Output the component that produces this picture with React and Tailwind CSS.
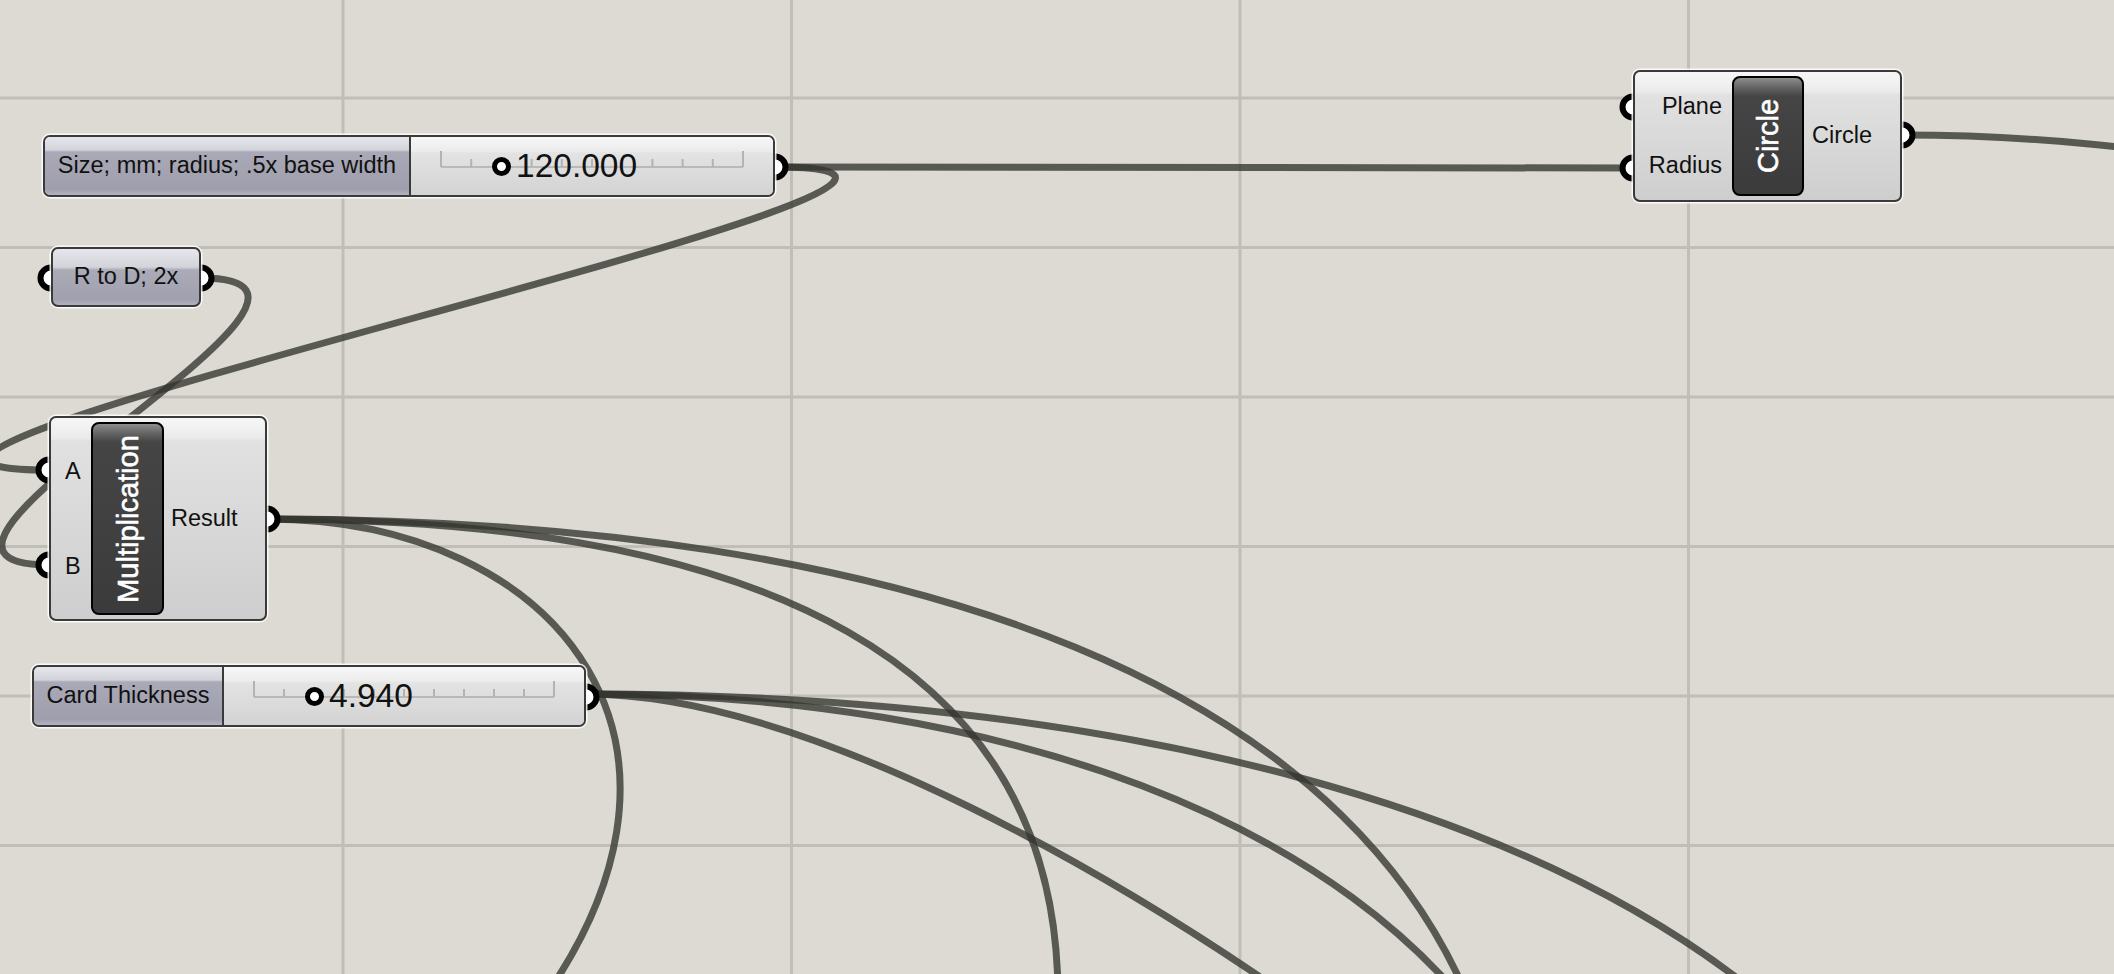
import React from 'react';

// canvas grid + wires are a drawing, nodes are placed on the canvas
const GRID_X = [343, 791.5, 1240, 1688.5];
const GRID_Y = [98, 247.5, 397, 546.5, 696, 845.5];

const WIRES = [
    'M775 167 L1633 168',
    'M775 167 C1145 167 -321 470 49 470',
    'M201 278 C411 278 -161 565 49 565',
    'M267 519 C560 519 745 750 520 1030',
    'M267 519 C760 519 1060 660 1058 1000',
    'M267 519 C900 519 1380 680 1490 1060',
    'M586 694 C1100 694 1560 800 1810 1040',
    'M586 694 C1000 694 1350 820 1500 1050',
    'M586 694 C810 694 1130 880 1350 1040',
    'M1902 135 C2050 135 2150 150 2300 170',
];

function Port({ side, y }) {
    return (
        <div
            className={`absolute z-0 w-[27px] h-[27px] -translate-x-1/2 -translate-y-1/2 rounded-full border-[6px] border-black bg-white ${side === 'left' ? 'left-0' : 'left-full'}`}
            style={{ top: y }}
        />
    );
}

function Ticks() {
    const n = 10;
    return (
        <svg className="absolute inset-0 h-full w-full" preserveAspectRatio="none">
            <svg x="30" y="0" width="calc(100% - 60px)" height="100%" overflow="visible">
                <line x1="0" y1="30" x2="100%" y2="30" stroke="#b9b9b9" strokeWidth="2" />
                {Array.from({ length: n + 1 }).map((_, i) => (
                    <line
                        key={i}
                        x1={`${(i / n) * 100}%`}
                        x2={`${(i / n) * 100}%`}
                        y1={i === 0 || i === n ? 14 : 22}
                        y2="30"
                        stroke="#b3b3b3"
                        strokeWidth="2"
                    />
                ))}
            </svg>
        </svg>
    );
}

function Slider({ left, top, width, nameWidth, name, value }) {
    return (
        <div className="absolute h-[62px]" style={{ left, top, width }}>
            <Port side="right" y={32} />
            <div className="relative z-10 flex h-full w-full overflow-hidden rounded-[7px] border-[2.5px] border-[#3a3a3a] shadow-[0_0_0_1.5px_rgba(255,255,255,0.85)]">
                <div
                    className="flex shrink-0 items-center justify-center border-r-[2.5px] border-[#3a3a3a] bg-[linear-gradient(to_bottom,#e6e6ec_0px,#d2d2da_13px,#aaa9b7_15px,#9f9ead_90%,#b3b2bf_100%)] text-[23.5px] text-[#111]"
                    style={{ width: nameWidth }}
                >
                    {name}
                </div>
                <div className="relative flex flex-1 items-center bg-[linear-gradient(to_bottom,#f7f7f7_0px,#ececec_14px,#e3e3e3_16px,#d3d3d3_100%)] pl-[81px]">
                    <Ticks />
                    <div className="relative h-[19px] w-[19px] rounded-full border-[5px] border-black bg-white" />
                    <span className="relative ml-[5px] text-[33.5px] leading-none text-[#111]">{value}</span>
                </div>
            </div>
        </div>
    );
}

function Pill({ label }) {
    return (
        <div className="relative h-full w-full overflow-hidden rounded-[8px] border-[2.5px] border-black bg-[linear-gradient(to_bottom,#8e8e8e_0px,#6a6a6a_8px,#454545_18px,#3b3b3b_100%)]">
            <span className="absolute left-1/2 top-1/2 -translate-x-1/2 -translate-y-1/2 -rotate-90 whitespace-nowrap text-[29px] leading-none text-white [-webkit-text-stroke:0.6px_white]">
                {label}
            </span>
        </div>
    );
}

const bodyCls =
    'relative z-10 flex h-full w-full rounded-[7px] border-[2.5px] border-[#3a3a3a] bg-[linear-gradient(to_bottom,#f6f6f6_0px,#ebebeb_20px,#e1e1e1_23px,#cecece_100%)] py-[4px] shadow-[0_0_0_1.5px_rgba(255,255,255,0.85)] text-[23.5px] text-[#111]';

export default function App() {
    return (
        <div className="relative h-[974px] w-[2114px] overflow-hidden bg-[#dcdad3] font-['Liberation_Sans',Arial,sans-serif]">
            <svg className="absolute inset-0" width="2114" height="974">
                {GRID_X.map((x) => (
                    <line key={'x' + x} x1={x} x2={x} y1="0" y2="974" stroke="#c1beb7" strokeWidth="3" />
                ))}
                {GRID_Y.map((y) => (
                    <line key={'y' + y} x1="0" x2="2114" y1={y} y2={y} stroke="#c1beb7" strokeWidth="3" />
                ))}
                {WIRES.map((d, i) => (
                    <path key={i} d={d} fill="none" stroke="#35352f" strokeOpacity="0.78" strokeWidth="7" />
                ))}
            </svg>

            {/* sliders */}
            <Slider left={43} top={135} width={732} nameWidth={366} name="Size; mm; radius; .5x base width" value="120.000" />
            <Slider left={32} top={665} width={554} nameWidth={190} name="Card Thickness" value="4.940" />

            {/* R to D panel */}
            <div className="absolute h-[60px] w-[150px]" style={{ left: 51, top: 247 }}>
                <Port side="left" y={31} />
                <Port side="right" y={31} />
                <div className="relative z-10 flex h-full w-full items-center justify-center rounded-[7px] border-[2.5px] border-[#3a3a3a] bg-[linear-gradient(to_bottom,#e6e6ec_0px,#d3d3da_18px,#ababb8_21px,#a0a0ae_90%,#b2b1be_100%)] text-[23.5px] text-[#111] shadow-[0_0_0_1.5px_rgba(255,255,255,0.85)]">
                    R to D; 2x
                </div>
            </div>

            {/* Multiplication */}
            <div className="absolute h-[205px] w-[218px]" style={{ left: 49, top: 416 }}>
                <Port side="left" y={54} />
                <Port side="left" y={149} />
                <Port side="right" y={103} />
                <div className={bodyCls}>
                    <div className="flex w-[40px] shrink-0 flex-col justify-center gap-[68px] pl-[14px] leading-[27px]">
                        <span>A</span>
                        <span>B</span>
                    </div>
                    <div className="w-[73px] shrink-0">
                        <Pill label="Multiplication" />
                    </div>
                    <div className="flex items-center pl-[7px]">Result</div>
                </div>
            </div>

            {/* Circle */}
            <div className="absolute h-[132px] w-[269px]" style={{ left: 1633, top: 70 }}>
                <Port side="left" y={37} />
                <Port side="left" y={98} />
                <Port side="right" y={65} />
                <div className={bodyCls}>
                    <div className="flex w-[97px] shrink-0 flex-col items-end justify-center gap-[32px] pr-[10px] leading-[27px]">
                        <span>Plane</span>
                        <span>Radius</span>
                    </div>
                    <div className="w-[72px] shrink-0">
                        <Pill label="Circle" />
                    </div>
                    <div className="flex items-center pl-[8px]">Circle</div>
                </div>
            </div>
        </div>
    );
}
